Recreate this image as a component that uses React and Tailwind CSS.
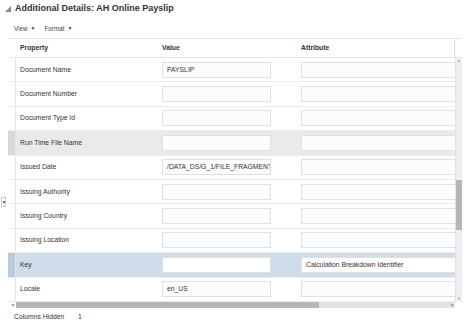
import React from 'react';

const rows = [
  { name: 'Document Name', value: 'PAYSLIP', attr: '' },
  { name: 'Document Number', value: '', attr: '' },
  { name: 'Document Type Id', value: '', attr: '' },
  { name: 'Run Time File Name', value: '', attr: '', state: 'hover' },
  { name: 'Issued Date', value: '/DATA_DS/G_1/FILE_FRAGMENT', attr: '' },
  { name: 'Issuing Authority', value: '', attr: '' },
  { name: 'Issuing Country', value: '', attr: '' },
  { name: 'Issuing Location', value: '', attr: '' },
  { name: 'Key', value: '', attr: 'Calculation Breakdown Identifier', state: 'selected' },
  { name: 'Locale', value: 'en_US', attr: '' },
];

function Row({ row }) {
  const bg =
    row.state === 'selected' ? 'bg-[#cfdce9]' : row.state === 'hover' ? 'bg-[#e9eaeb]' : 'bg-white';
  const gutter =
    row.state === 'selected' ? 'bg-[#b9cadb]' : row.state === 'hover' ? 'bg-[#d6d7d8]' : 'bg-white';
  const inputBg = row.state === 'selected' ? 'bg-white' : 'bg-[#fbfcfd]';
  return (
    <div className={`flex h-[24.4px] border-b border-[#ececec] ${bg}`}>
      <div className={`w-[8px] shrink-0 border-r border-[#e4e4e4] ${gutter}`} />
      <div className="w-[139px] shrink-0 flex items-center pl-[4px] text-[6.8px] text-[#333]">{row.name}</div>
      <div className="w-[138px] shrink-0 flex items-center pl-[7px]">
        <div className={`w-[109px] h-[16px] border border-[#dde1e6] ${inputBg} flex items-center pl-[4px] text-[6.8px] text-[#333] whitespace-nowrap overflow-hidden`}>
          {row.value}
        </div>
      </div>
      <div className="flex-1 flex items-center pl-[8px] overflow-hidden">
        <div className={`w-[160px] shrink-0 h-[16px] border border-[#dde1e6] ${inputBg} flex items-center pl-[4px] text-[6.8px] text-[#333] whitespace-nowrap`}>
          {row.attr}
        </div>
      </div>
    </div>
  );
}

export default function App() {
  return (
    <div className="w-[474px] h-[323px] bg-white overflow-hidden relative font-['Liberation_Sans',Arial,sans-serif] text-[#333]">
      <div className="h-[17px] pt-[1px] flex items-center pl-[5px] gap-[4px]">
        <svg width="6" height="6" viewBox="0 0 6 6">
          <polygon points="6,0 6,6 0,6" fill="#8a8a8a" />
        </svg>
        <span className="text-[9px] font-bold text-[#333]">Additional Details: AH Online Payslip</span>
      </div>
      <div className="h-[21px] pt-[3px] flex items-center pl-[14px] gap-[9px] text-[6.3px] text-[#444]">
        <span className="flex items-center gap-[3px]">View <span className="text-[5px]">▼</span></span>
        <span className="flex items-center gap-[3px]">Format <span className="text-[5px]">▼</span></span>
      </div>
      <div className="ml-[8px] w-[454px]">
        <div className="flex h-[20px] pt-[1px] border-t border-b border-[#e6e6e6] bg-white">
          <div className="w-[8px] shrink-0" />
          <div className="w-[139px] shrink-0 flex items-center pl-[4px] text-[6.8px] font-bold">Property</div>
          <div className="w-[138px] shrink-0 flex items-center pl-[7px] text-[6.8px] font-bold">Value</div>
          <div className="w-[162px] shrink-0 flex items-center pl-[8px] text-[6.8px] font-bold border-r border-[#d8d8d8]">Attribute</div>
          <div className="flex-1" />
        </div>
        <div className="flex">
          <div className="w-[447px] shrink-0 overflow-hidden">
            {rows.map((r) => (
              <Row key={r.name} row={r} />
            ))}
          </div>
          <div className="w-[7px] shrink-0 bg-[#efefef] border-l border-[#e2e2e2] flex flex-col">
            <div className="h-[6px] flex items-center justify-center text-[4px] text-[#999]">▲</div>
            <div className="h-[116px]" />
            <div className="h-[50px] bg-[#b6b6b6]" />
            <div className="flex-1" />
            <div className="h-[6px] flex items-center justify-center text-[4px] text-[#999]">▼</div>
          </div>
        </div>
        <div className="flex h-[6px]">
          <div className="w-[8px] shrink-0 bg-white flex items-center justify-center text-[4px] text-[#999]">◀</div>
          <div className="w-[439px] shrink-0 bg-[#e3e3e3] flex items-center">
            <div className="w-[303px] h-full bg-[#b6b6b6]" />
            <div className="flex-1" />
            <div className="w-[6px] text-[4px] text-[#999] flex items-center justify-center">▶</div>
          </div>
        </div>
      </div>
      <div className="flex items-center h-[14px] mt-[2px] pl-[14px] text-[6.8px] text-[#333]">
        <span className="w-[64px]">Columns Hidden</span>
        <span>1</span>
      </div>
      <div className="absolute left-[1px] top-[197px] w-[5px] h-[10px] border border-[#c8c8c8] bg-white flex items-center justify-center">
        <div className="w-[2px] h-[2px] bg-[#333] rounded-full" />
      </div>
    </div>
  );
}
